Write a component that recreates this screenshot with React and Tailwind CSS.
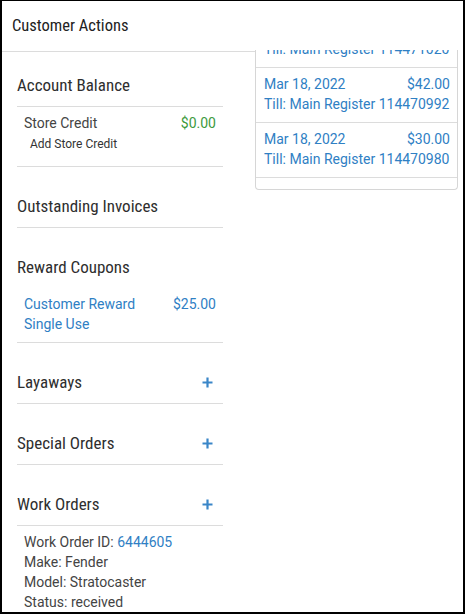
import React from 'react'

const font = { fontFamily: 'Roboto, "Liberation Sans", sans-serif' }
const narrow = { fontFamily: '"Roboto Condensed", "Liberation Sans Narrow", "DejaVu Sans Condensed", Roboto, sans-serif' }

const transactions = [
  { date: 'Mar 18, 2022', amount: '$55.00', till: 'Till: Main Register 114471020' },
  { date: 'Mar 18, 2022', amount: '$42.00', till: 'Till: Main Register 114470992' },
  { date: 'Mar 18, 2022', amount: '$30.00', till: 'Till: Main Register 114470980' },
]

const Plus = () => (
  <svg width="11" height="11" viewBox="0 0 11 11" className="text-[#3a86c8]">
    <path d="M5.5 0.5v10M0.5 5.5h10" stroke="currentColor" strokeWidth="2.2" />
  </svg>
)

const Section = ({ title, plus, divider = true, first, children }) => (
  <div className={first ? 'mt-[22px]' : 'mt-7'}>
    <div
      className={`flex items-center justify-between pb-[10px] ${divider ? 'border-b border-[#dcdcdc]' : ''}`}
    >
      <span style={narrow} className="text-[17px] leading-[22px] text-[#2e2e2e]">{title}</span>
      {plus && (
        <span className="mr-[10px] flex">
          <Plus />
        </span>
      )}
    </div>
    {children}
  </div>
)

export default function App() {
  return (
    <div
      style={font}
      className="w-[465px] h-[614px] overflow-hidden bg-white border-t border-l-2 border-r-2 border-b-2 border-black"
    >
      <div style={narrow} className="h-[50px] flex items-center pl-[10px] text-[16.5px] text-[#222]">Customer Actions</div>

      <div className="flex">
        {/* left column */}
        <div className="w-[253px] border-t border-[#dcdcdc]">
          <div className="ml-[15px] w-[206px]">
            <Section title="Account Balance" first>
              <div className="pt-[6px] pb-[14px] border-b border-[#dcdcdc] px-[7px]">
                <div className="flex justify-between text-sm leading-5">
                  <span className="text-[#444]">Store Credit</span>
                  <span className="text-[#3d9a3d]">$0.00</span>
                </div>
                <div className="mt-[3px] pl-[6px] text-xs leading-4 text-[#333]">Add Store Credit</div>
              </div>
            </Section>

            <Section title="Outstanding Invoices" />

            <Section title="Reward Coupons" divider={false}>
              <div className="pt-[6px] pb-2 border-b border-[#dcdcdc] px-[7px] flex justify-between text-sm leading-5 text-[#2f80c4]">
                <div>
                  <div>Customer Reward</div>
                  <div>Single Use</div>
                </div>
                <span>$25.00</span>
              </div>
            </Section>

            <Section title="Layaways" plus />
            <Section title="Special Orders" plus />
            <Section title="Work Orders" plus>
              <div className="pt-[6px] px-[7px] text-sm leading-5 text-[#444]">
                <div>
                  Work Order ID: <span className="text-[#2f80c4]">6444605</span>
                </div>
                <div>Make: Fender</div>
                <div>Model: Stratocaster</div>
                <div>Status: received</div>
              </div>
            </Section>
          </div>
        </div>

        {/* right card - recent sales list, scrolled */}
        <div className="w-[203px] h-[140px] -mt-px overflow-hidden self-start">
          <div className="h-[140px] overflow-hidden border-x border-b border-[#d6d6d6] rounded-b-[4px] bg-white">
            {transactions.map((t, i) => (
              <div
                key={i}
                className={`pt-[6px] pb-2 pl-2 pr-[7px] border-b border-[#dcdcdc] text-sm leading-5 text-[#2f80c4] ${i === 0 ? '-mt-[37px]' : ''}`}
              >
                <div className="flex justify-between">
                  <span>{t.date}</span>
                  <span>{t.amount}</span>
                </div>
                <div className="whitespace-nowrap">{t.till}</div>
              </div>
            ))}
          </div>
        </div>
      </div>
    </div>
  )
}
